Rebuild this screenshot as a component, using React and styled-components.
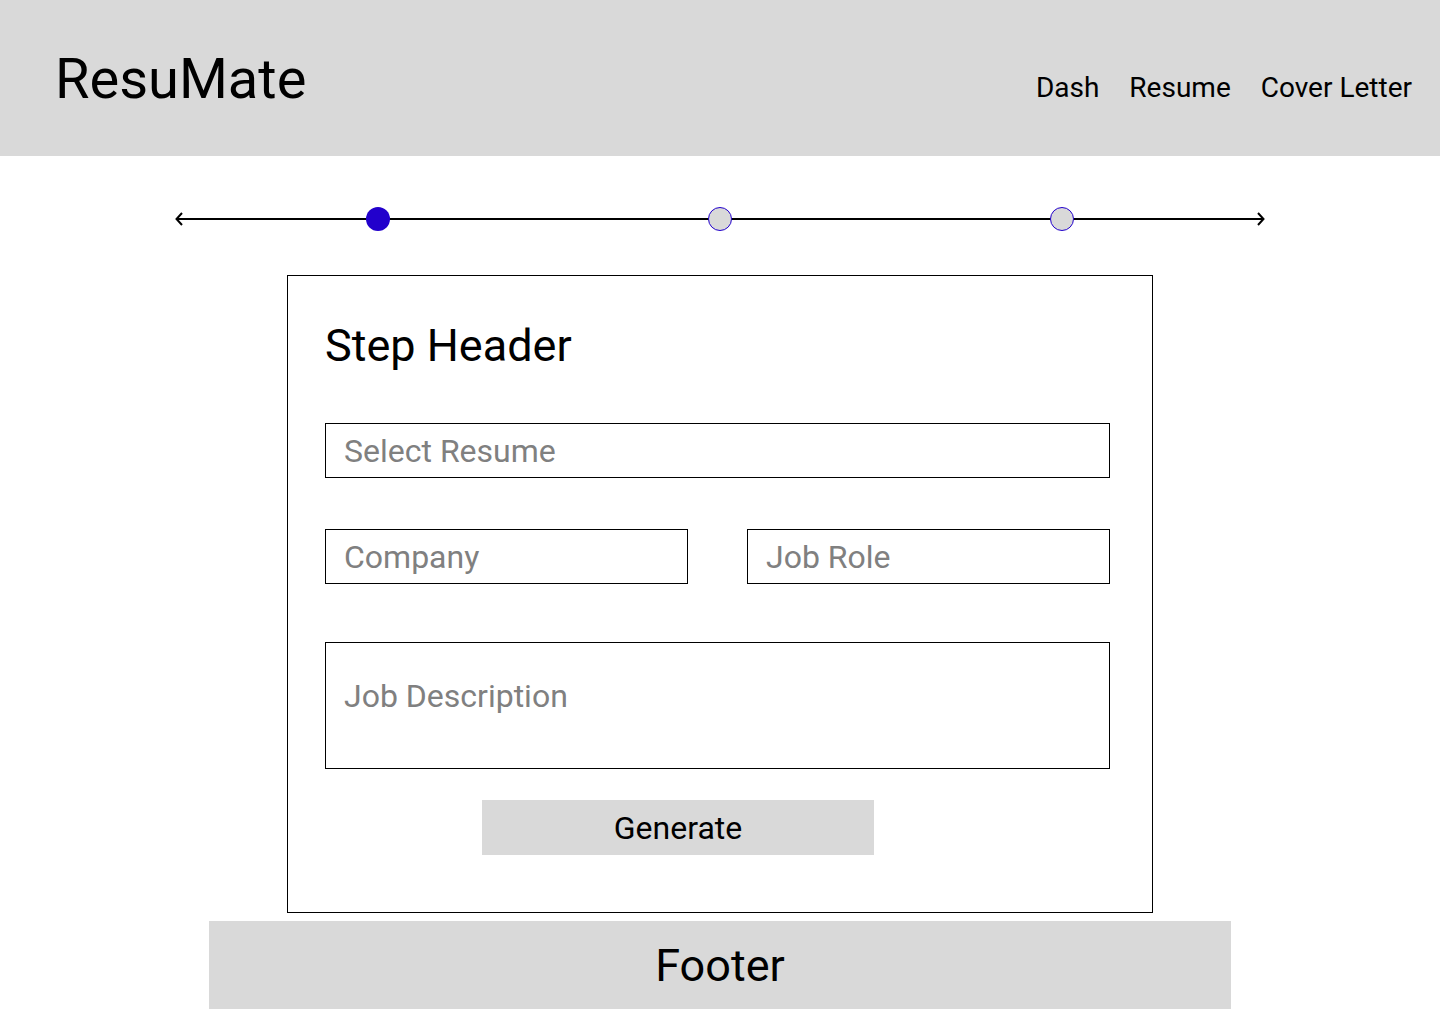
import React from "react";
import styled, { createGlobalStyle } from "styled-components";

const GlobalStyle = createGlobalStyle`
  body {
    margin: 0;
    background: #ffffff;
    font-family: Roboto, "Liberation Sans", sans-serif;
    color: #000;
  }
`;

const Header = styled.header`
  height: 156px;
  background: #d9d9d9;
  display: flex;
  align-items: flex-start;
  justify-content: space-between;
  padding: 0 28px 0 55px;
  box-sizing: border-box;
`;

const Logo = styled.div`
  font-size: 56px;
  line-height: 1;
  margin-top: 51px;
`;

const Nav = styled.nav`
  display: flex;
  gap: 30px;
  margin-top: 74px;
`;

const NavLink = styled.a`
  font-size: 28px;
  line-height: 1;
  color: #000;
  text-decoration: none;
`;

const Stepper = styled.div`
  width: 1090px;
  margin: 51px auto 0;
  height: 24px;
`;

const Main = styled.main`
  display: flex;
  flex-direction: column;
  align-items: center;
`;

const Card = styled.section`
  width: 866px;
  height: 638px;
  box-sizing: border-box;
  border: 1px solid #000;
  margin-top: 44px;
  padding: 0 42px 0 37px;
  display: flex;
  flex-direction: column;
`;

const StepTitle = styled.h2`
  font-size: 45px;
  font-weight: 400;
  line-height: 1;
  margin: 47px 0 0;
`;

const Field = styled.div`
  height: ${(p) => (p.$tall ? "127px" : "55px")};
  box-sizing: border-box;
  border: 1px solid #000;
  padding: ${(p) => (p.$tall ? "37px" : "11px")} 18px 0;
  font-size: 32px;
  line-height: 1;
  color: #808080;
  width: ${(p) => p.$width || "100%"};
`;

const Row = styled.div`
  display: flex;
  justify-content: space-between;
  margin-top: ${(p) => p.$gap}px;
`;

const Block = styled.div`
  margin-top: ${(p) => p.$gap}px;
`;

const GenerateButton = styled.button`
  width: 392px;
  height: 55px;
  margin: 31px 0 0 157px;
  border: none;
  background: #d9d9d9;
  font-family: Roboto, "Liberation Sans", sans-serif;
  font-size: 32px;
  color: #000;
  padding: 0;
  align-self: flex-start;
`;

const Footer = styled.footer`
  width: 1022px;
  height: 88px;
  margin-top: 8px;
  background: #d9d9d9;
  display: flex;
  align-items: center;
  justify-content: center;
  font-size: 45px;
`;

const Timeline = () => (
  <svg width="1090" height="24" viewBox="0 0 1090 24">
    <line x1="1" y1="12" x2="1088" y2="12" stroke="#000" strokeWidth="2" />
    <path d="M7 6 L1.5 12 L7 18" fill="none" stroke="#000" strokeWidth="2" />
    <path d="M1083 6 L1088.5 12 L1083 18" fill="none" stroke="#000" strokeWidth="2" />
    <circle cx="203" cy="12" r="12" fill="#2200cc" />
    <circle cx="545" cy="12" r="11.5" fill="#d9d9d9" stroke="#2200cc" strokeWidth="1" />
    <circle cx="887" cy="12" r="11.5" fill="#d9d9d9" stroke="#2200cc" strokeWidth="1" />
  </svg>
);

export default function App() {
  return (
    <>
      <GlobalStyle />
      <Header>
        <Logo>ResuMate</Logo>
        <Nav>
          <NavLink>Dash</NavLink>
          <NavLink>Resume</NavLink>
          <NavLink>Cover Letter</NavLink>
        </Nav>
      </Header>
      <Main>
        <Stepper>
          <Timeline />
        </Stepper>
        <Card>
          <StepTitle>Step Header</StepTitle>
          <Block $gap={55}>
            <Field>Select Resume</Field>
          </Block>
          <Row $gap={51}>
            <Field $width="363px">Company</Field>
            <Field $width="363px">Job Role</Field>
          </Row>
          <Block $gap={58}>
            <Field $tall>Job Description</Field>
          </Block>
          <GenerateButton>Generate</GenerateButton>
        </Card>
        <Footer>Footer</Footer>
      </Main>
    </>
  );
}
